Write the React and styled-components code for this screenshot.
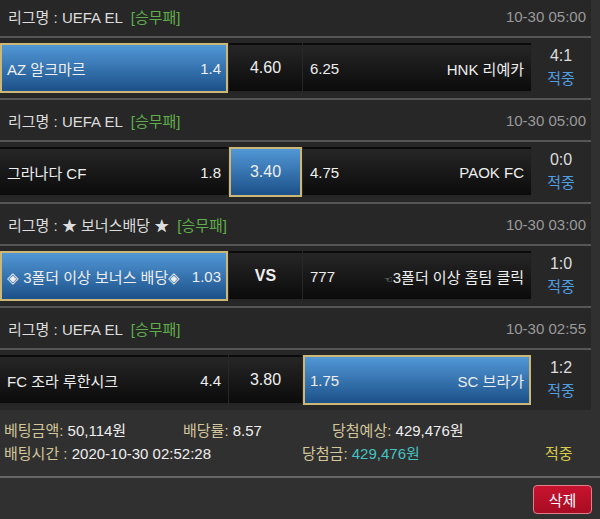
import React from "react";
import styled, { createGlobalStyle } from "styled-components";

const GlobalStyle = createGlobalStyle`
  body {
    margin: 0;
    background: #303030;
    font-family: "Liberation Sans", "Noto Sans CJK KR", sans-serif;
  }
`;

const Page = styled.div`
  width: 600px;
  height: 519px;
  overflow: hidden;
  background: #303030;
`;

const BetList = styled.div`
  margin-top: -4px;
  width: 591px;
`;

const Block = styled.div`
  background: #272727;
`;

const LeagueHeader = styled.div`
  height: 40px;
  display: flex;
  align-items: center;
  justify-content: space-between;
  padding: 0 5px 0 8px;
  border-bottom: 2px solid #555;
  font-size: 15px;
  color: #ddd;
`;

const BetType = styled.span`
  color: #5fae4a;
  margin-left: 8px;
`;

const Kickoff = styled.span`
  color: #9a9a9a;
  font-size: 15px;
`;

const MatchRow = styled.div`
  display: flex;
  padding: 5px 0;
  border-bottom: ${(p) => (p.$last ? "none" : "2px solid #555")};
`;

const Cell = styled.div`
  box-sizing: border-box;
  height: 50px;
  display: flex;
  align-items: center;
  font-size: 15px;
  color: #eee;
  white-space: nowrap;
  border: 2px solid ${(p) => (p.$picked ? "#cdb777" : "transparent")};
  background: ${(p) =>
    p.$picked
      ? "linear-gradient(to bottom, #5197d6, #1c5189)"
      : "linear-gradient(to bottom, #262626, #0b0b0b)"};
`;

const TeamCell = styled(Cell)`
  width: 228px;
  justify-content: space-between;
  padding: 0 5px;
`;

const DrawCell = styled(Cell)`
  width: 73px;
  margin: 0 1px;
  justify-content: center;
  font-size: 16px;
  font-weight: ${(p) => (p.$bold ? "bold" : "normal")};
`;

const ResultCol = styled.div`
  flex: 1;
  display: flex;
  flex-direction: column;
  align-items: center;
  justify-content: center;
  font-size: 15px;
  line-height: 23px;
  margin-top: -2px;
`;

const Score = styled.span`
  color: #ddd;
  font-size: 16px;
`;

const ResultMark = styled.span`
  color: #4f9ee0;
`;

const Pointer = styled.span`
  font-size: 10px;
  color: #999;
  font-family: "DejaVu Sans", sans-serif;
`;

const Summary = styled.div`
  padding: 8px 0 12px 4px;
  border-bottom: 2px solid #666;
  font-size: 15px;
`;

const SummaryRow = styled.div`
  display: flex;
  height: 23px;
  align-items: center;
  white-space: nowrap;
`;

const Field = styled.div`
  width: ${(p) => p.$w}px;
  flex-shrink: 0;
`;

const Label = styled.span`
  color: #d2c69a;
`;

const Value = styled.span`
  color: ${(p) => p.$color || "#eee"};
`;

const Actions = styled.div`
  display: flex;
  justify-content: flex-end;
  padding: 7px 8px 0 0;
`;

const DeleteButton = styled.button`
  width: 59px;
  height: 29px;
  border: 1px solid #e27d8c;
  border-radius: 4px;
  background: linear-gradient(to bottom, #c8132f, #a80c23);
  color: #fff;
  font-size: 15px;
  font-family: "Liberation Sans", "Noto Sans CJK KR", sans-serif;
`;

const bets = [
  {
    league: "UEFA EL",
    time: "10-30 05:00",
    home: "AZ 알크마르",
    homeOdds: "1.4",
    draw: "4.60",
    awayOdds: "6.25",
    away: "HNK 리예카",
    pick: "home",
    score: "4:1",
  },
  {
    league: "UEFA EL",
    time: "10-30 05:00",
    home: "그라나다 CF",
    homeOdds: "1.8",
    draw: "3.40",
    awayOdds: "4.75",
    away: "PAOK FC",
    pick: "draw",
    score: "0:0",
  },
  {
    league: "★ 보너스배당 ★",
    time: "10-30 03:00",
    home: "◈ 3폴더 이상 보너스 배당◈",
    homeOdds: "1.03",
    draw: "VS",
    awayOdds: "777",
    away: (
      <span>
        <Pointer>☜</Pointer>3폴더 이상 홈팀 클릭
      </span>
    ),
    pick: "home",
    score: "1:0",
    bonus: true,
  },
  {
    league: "UEFA EL",
    time: "10-30 02:55",
    home: "FC 조라 루한시크",
    homeOdds: "4.4",
    draw: "3.80",
    awayOdds: "1.75",
    away: "SC 브라가",
    pick: "away",
    score: "1:2",
  },
];

export default function App() {
  return (
    <Page>
      <GlobalStyle />
      <BetList>
        {bets.map((b, i) => (
          <Block key={i}>
            <LeagueHeader>
              <span>
                리그명 : {b.league}
                <BetType>[승무패]</BetType>
              </span>
              <Kickoff>{b.time}</Kickoff>
            </LeagueHeader>
            <MatchRow $last={i === bets.length - 1}>
              <TeamCell $picked={b.pick === "home"}>
                <span>{b.home}</span>
                <span>{b.homeOdds}</span>
              </TeamCell>
              <DrawCell $picked={b.pick === "draw"} $bold={b.bonus}>
                {b.draw}
              </DrawCell>
              <TeamCell $picked={b.pick === "away"}>
                <span>{b.awayOdds}</span>
                <span>{b.away}</span>
              </TeamCell>
              <ResultCol>
                <Score>{b.score}</Score>
                <ResultMark>적중</ResultMark>
              </ResultCol>
            </MatchRow>
          </Block>
        ))}
      </BetList>
      <Summary>
        <SummaryRow>
          <Field $w={179}>
            <Label>베팅금액:</Label> <Value>50,114원</Value>
          </Field>
          <Field $w={149}>
            <Label>배당률:</Label> <Value>8.57</Value>
          </Field>
          <Field $w={200}>
            <Label>당첨예상:</Label> <Value>429,476원</Value>
          </Field>
        </SummaryRow>
        <SummaryRow>
          <Field $w={298}>
            <Label>배팅시간 :</Label> <Value>2020-10-30 02:52:28</Value>
          </Field>
          <Field $w={243}>
            <Label>당첨금:</Label> <Value $color="#47c2c2">429,476원</Value>
          </Field>
          <Field $w={40}>
            <Value $color="#d8cb4c">적중</Value>
          </Field>
        </SummaryRow>
      </Summary>
      <Actions>
        <DeleteButton>삭제</DeleteButton>
      </Actions>
    </Page>
  );
}
